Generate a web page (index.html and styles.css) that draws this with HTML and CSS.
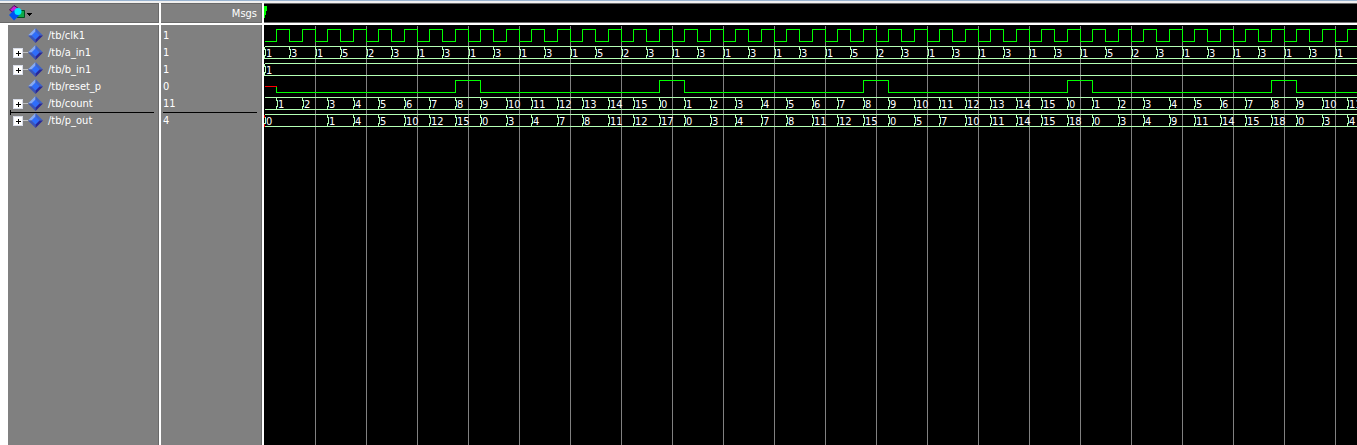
FILE: index.html
```html
<!DOCTYPE html>
<html lang="en">
<head>
    <meta charset="UTF-8">
    <meta name="viewport" content="width=device-width, initial-scale=1.0">
    <title>Wave</title>
    <link rel="stylesheet" href="styles.css">
</head>
<body>
    <svg class="defs" width="0" height="0" aria-hidden="true">
        <symbol id="diamond" viewBox="0 0 15 15">
            <path fill="#86aaf4" d="M7.5 0L0 7.5H4L7.5 4z"/>
            <path fill="#3d62c8" d="M7.5 0L15 7.5H11L7.5 4z"/>
            <path fill="#3a55b8" d="M0 7.5L7.5 15V11L4 7.5z"/>
            <path fill="#26269a" d="M15 7.5L7.5 15V11L11 7.5z"/>
            <path fill="#2f6dfa" d="M7.5 3.5L11.5 7.5L7.5 11.5L3.5 7.5z"/>
        </symbol>
    </svg>

    <main class="wave-window">
        <section class="names">
            <div class="head">
                <button class="menu" aria-label="Object menu">
                    <svg width="24" height="16" viewBox="0 0 24 16">
                        <path fill="#c820d8" stroke="#500858" d="M0.5 5L5 0.5L9.5 3.5L5 8z"/>
                        <path fill="#10a848" stroke="#005020" d="M8.5 5.5H15.5V12.5H8.5z"/>
                        <path fill="#0050f0" d="M5 5L10.5 10L5 15.5L0 10z"/>
                        <circle cx="9" cy="6.5" r="3.5" fill="#00e8ff"/>
                        <path fill="#000" d="M18 8H23V9H22V10H21V11H20V10H19V9H18z"/>
                    </svg>
                </button>
            </div>
            <ul class="list" id="names"></ul>
        </section>

        <section class="values">
            <div class="head">Msgs</div>
            <ul class="list" id="values"></ul>
        </section>

        <section class="waves">
            <div class="ruler">
                <svg width="4" height="12" viewBox="0 0 4 12" shape-rendering="crispEdges">
                    <path fill="#0f0" d="M0 0H3V5H2V9H1V12H0z"/>
                </svg>
            </div>
            <svg class="plot" id="plot" shape-rendering="crispEdges"></svg>
        </section>
    </main>

    <script src="wave.js"></script>
</body>
</html>
```
FILE: styles.css
```css
* {
    box-sizing: border-box;
}
body {
    margin: 0;
    background: #fff;
    color: #fff;
    font-family: "DejaVu Sans Condensed", "DejaVu Sans", sans-serif;
    font-size: 11px;
    line-height: 17px;
}
.defs {
    position: absolute;
}
.wave-window {
    display: flex;
    min-height: 100vh;
    border-top: 1px solid #99b4d1;
    padding-top: 2px;
    background: #f0f0f0;
}
.names,
.values,
.waves {
    display: flex;
    flex-direction: column;
    background: #fff;
}
.names {
    width: 161px;
    padding-right: 2px;
}
.values {
    width: 103px;
    padding-right: 2px;
}
.waves {
    flex: 1;
    min-width: 0;
    overflow: hidden;
}
.head,
.ruler {
    height: 20px;
    margin-bottom: 2px;
    border-top: 1px solid #696969;
    border-bottom: 1px solid #696969;
    background: #808080;
}
.head {
    border-right: 1px solid #696969;
    padding: 1px 4px 0 9px;
    text-align: right;
}
.names .head {
    text-align: left;
}
.ruler {
    background: #000;
    padding-top: 2px;
}
.ruler svg {
    display: block;
}
.menu {
    display: block;
    padding: 0;
    border: 0;
    background: none;
}
.menu svg {
    display: block;
}
.list {
    flex: 1;
    margin: 0;
    padding: 2px 0 0;
    list-style: none;
    background: #808080;
    border-right: 1px solid #696969;
}
.names .list {
    margin-left: 8px;
}
.row {
    display: flex;
    align-items: center;
    height: 17px;
}
.names .row {
    padding-left: 5px;
}
.values .row {
    padding-left: 2px;
}
.toggle {
    display: flex;
    align-items: center;
    width: 15px;
}
.toggle button {
    flex: none;
    width: 10px;
    height: 10px;
    padding: 0;
    border: 1px solid #d8dce8;
    background: #fff;
}
.toggle svg {
    display: block;
}
.toggle::after {
    content: "";
    flex: 1;
    height: 1px;
    background: #c0c0c0;
}
.toggle.empty::after {
    display: none;
}
.row .icon {
    flex: none;
    width: 15px;
    height: 15px;
    margin-right: 5px;
}
.marker {
    position: relative;
}
.marker::after {
    content: "";
    position: absolute;
    left: 2px;
    right: 4px;
    bottom: -1px;
    height: 1px;
    background: #000;
}
.names .marker::before {
    content: "";
    position: absolute;
    left: 2px;
    bottom: -3px;
    width: 1px;
    height: 5px;
    background: #000;
}
.plot {
    flex: 1;
    display: block;
    width: 100%;
    min-height: 110px;
    background: #000;
}
.plot path {
    fill: none;
}
.plot text {
    fill: #fff;
}
.grid {
    stroke: #808080;
}
.logic {
    stroke: #0f0;
}
.bus {
    stroke: #b4ffb4;
}
.unknown {
    stroke: #f00;
}
```
FILE: wave.js
```javascript
const HALF = 12.75; // half a clock period in pixels
const ROW = 17;

const aValues = [1, 3, 1, 5, 2, 3, 1, 3, 1, 3];
const pValues = [
    1, 4, 5, 10, 12, 15, 0, 3, 4, 7, 8, 11, 12, 17,
    0, 3, 4, 7, 8, 11, 12, 15, 0, 5, 7, 10, 11, 14, 15, 18,
    0, 3, 4, 9, 11, 14, 15, 18, 0, 3, 4
];

const signals = [
    { name: '/tb/clk1', value: '1' },
    { name: '/tb/a_in1', value: '1', bus: true },
    { name: '/tb/b_in1', value: '1', bus: true },
    { name: '/tb/reset_p', value: '0' },
    { name: '/tb/count', value: '11', bus: true, marker: true },
    { name: '/tb/p_out', value: '4', bus: true }
];

const plus = '<button aria-label="Expand"><svg width="8" height="8" shape-rendering="crispEdges">' +
    '<path d="M2 4h5v1h-5zM4 2h1v5h-1z"/></svg></button>';

document.getElementById('names').innerHTML = signals.map(s =>
    `<li class="row ${s.marker ? 'marker' : ''}">
        <span class="toggle ${s.bus ? '' : 'empty'}">${s.bus ? plus : ''}</span>
        <svg class="icon"><use href="#diamond"/></svg>${s.name}
    </li>`).join('');

document.getElementById('values').innerHTML = signals.map(s =>
    `<li class="row ${s.marker ? 'marker' : ''}">${s.value}</li>`).join('');

// x of the k-th half period
function edge(k) {
    return Math.floor(k * HALF);
}

function path(cls, d) {
    return `<path class="${cls}" transform="translate(0.5 0.5)" d="${d}"/>`;
}

// segments: [half period, label]
function bus(row, width, segments) {
    const top = 4 + row * ROW;
    let d = `M0 ${top}H${width}M0 ${top + 12}H${width}`;
    let labels = '';
    segments.forEach(([k, label]) => {
        const x = edge(k);
        if (x >= width) return;
        // the line steps one pixel right in the middle of a change
        d += `M${x} ${top}V${top + 3}H${x + 1}V${top + 9}H${x}V${top + 12}`;
        labels += `<text x="${x + 2}" y="${top + 11}">${label}</text>`;
    });
    return path('bus', d) + labels;
}

function draw() {
    const plot = document.getElementById('plot');
    const width = plot.clientWidth;
    const height = plot.clientHeight;
    const count = Math.ceil(width / HALF);
    let grid = '';
    let clk = 'M0 16';
    let reset = `M12 ${4 + 3 * ROW + 6}V${4 + 3 * ROW + 12}`;
    const a = [];
    const counter = [];
    const p = [[0, 0]];

    for (let k = 1; k <= count; k++) {
        clk += `H${edge(k)}V${k % 2 ? 4 : 16}`;
        if (k % 4 === 0) grid += `M${edge(k)} 0V${height}`;
        if (k % 16 === 15) reset += `H${edge(k)}V${4 + 3 * ROW}`;
        if (k % 16 === 1 && k > 1) reset += `H${edge(k)}V${4 + 3 * ROW + 12}`;
    }
    reset += `H${width}`;

    for (let i = 0; i * 2 <= count; i++) {
        a.push([i * 2, aValues[i % 10]]);
        counter.push([i * 2 + 1, (i + 1) % 16]);
        if (i >= 2 && i - 2 < pValues.length) p.push([i * 2 + 1, pValues[i - 2]]);
    }

    plot.innerHTML = path('grid', grid) +
        path('logic', clk) +
        bus(1, width, a) +
        bus(2, width, [[0, 1]]) +
        path('logic', reset) +
        path('unknown', `M0 ${4 + 3 * ROW + 6}H12`) +
        bus(4, width, counter) +
        bus(5, width, p) +
        path('unknown', `M0 ${4 + 5 * ROW}v3m0 6v3`);
}

draw();
window.addEventListener('resize', draw);
```
